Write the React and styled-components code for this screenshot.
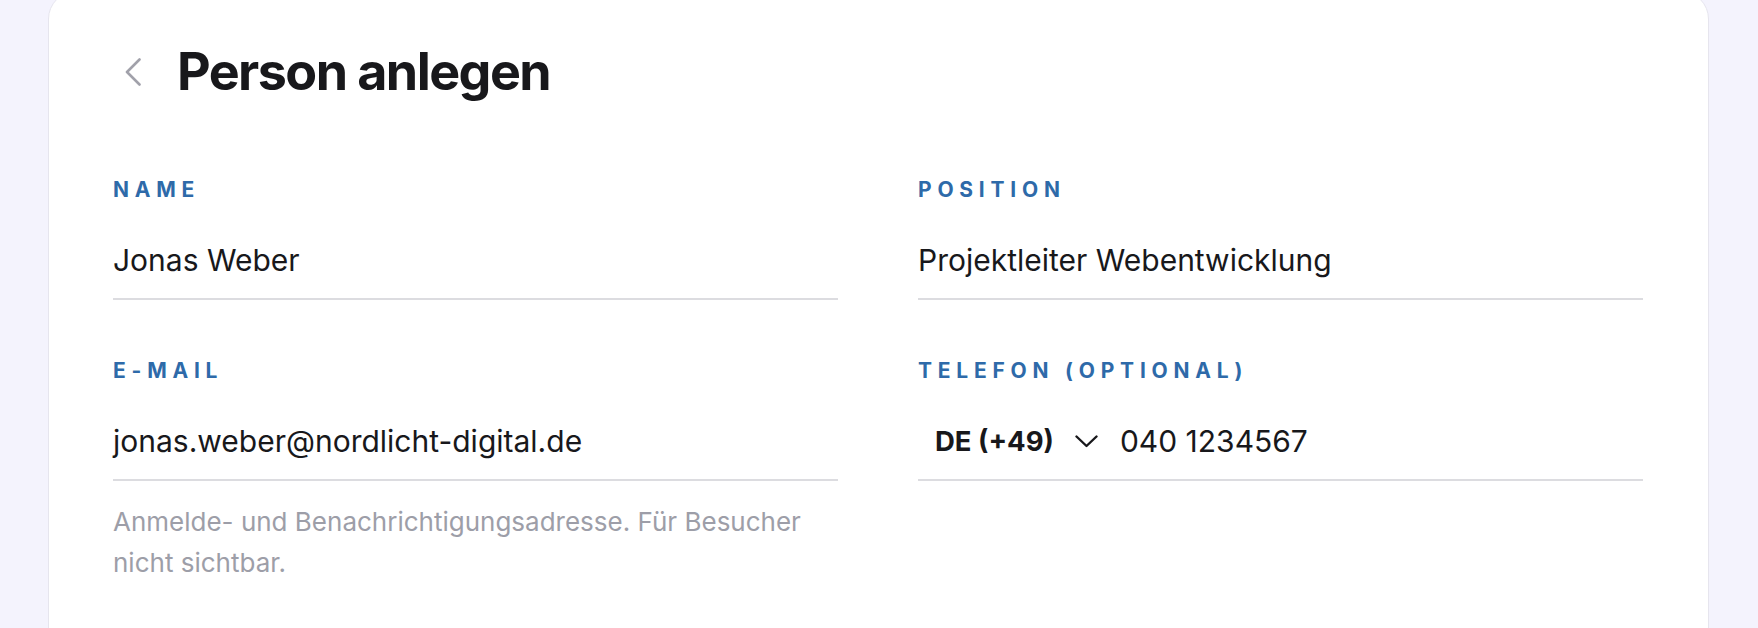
import React from "react";
import styled, { createGlobalStyle } from "styled-components";

const GlobalStyle = createGlobalStyle`
  html, body {
    margin: 0;
    padding: 0;
    overflow: hidden;
    background: #f4f3fd;
    font-family: Inter, "Noto Sans", sans-serif;
  }
`;

const Page = styled.div`
  min-height: 628px;
  background: #f4f3fd;
`;

const Card = styled.div`
  width: 1661px;
  margin: -9px 0 0 48px;
  box-sizing: border-box;
  background: #ffffff;
  border: 1px solid #e6e5ee;
  border-radius: 28px;
  padding: 49px 65px 120px 64px;
`;

const Header = styled.div`
  display: flex;
  align-items: center;
  gap: 24px;
  margin-bottom: 74px;
`;

const BackButton = styled.button`
  width: 40px;
  height: 40px;
  padding: 0;
  border: none;
  background: none;
  display: flex;
  align-items: center;
  justify-content: center;
  color: #a1a1aa;
  cursor: pointer;
`;

const Title = styled.h1`
  margin: 0;
  font-size: 52px;
  line-height: 62px;
  font-weight: 700;
  letter-spacing: -0.03em;
  color: #18181b;
`;

const Grid = styled.div`
  display: grid;
  grid-template-columns: 1fr 1fr;
  column-gap: 80px;
  row-gap: 58px;
`;

const Field = styled.div`
  display: flex;
  flex-direction: column;
`;

const Label = styled.label`
  font-size: 21px;
  line-height: 26px;
  font-weight: 700;
  letter-spacing: 0.275em;
  text-transform: uppercase;
  color: #2e6aa9;
  margin-bottom: 18px;
`;

const Control = styled.div`
  display: flex;
  align-items: center;
  padding: 21px 0 20px;
  border-bottom: 2px solid #dcdce0;
`;

const Value = styled.span`
  font-size: 30px;
  line-height: 36px;
  color: #18181b;
`;

const CountrySelect = styled.div`
  display: flex;
  align-items: center;
  gap: 21px;
  padding: 0 22px 0 17px;
  font-size: 27.5px;
  line-height: 36px;
  font-weight: 700;
  color: #18181b;
`;

const Hint = styled.p`
  margin: 20px 0 0;
  font-size: 26px;
  line-height: 41px;
  color: #9d9ea8;
`;

const ChevronLeft = () => (
  <svg width="18" height="28" viewBox="0 0 18 28" fill="none">
    <path
      d="M15.5 1.5 L3 14 L15.5 26.5"
      stroke="currentColor"
      strokeWidth="2.6"
      strokeLinecap="round"
      strokeLinejoin="round"
    />
  </svg>
);

const ChevronDown = () => (
  <svg width="23" height="13" viewBox="0 0 23 13" fill="none">
    <path
      d="M1.5 1.5 L11.5 11 L21.5 1.5"
      stroke="#18181b"
      strokeWidth="2.4"
      strokeLinecap="round"
      strokeLinejoin="round"
    />
  </svg>
);

export default function App() {
  return (
    <Page>
      <GlobalStyle />
      <Card>
        <Header>
          <BackButton aria-label="Zurück">
            <ChevronLeft />
          </BackButton>
          <Title>Person anlegen</Title>
        </Header>
        <Grid>
          <Field>
            <Label>Name</Label>
            <Control>
              <Value>Jonas Weber</Value>
            </Control>
          </Field>
          <Field>
            <Label>Position</Label>
            <Control>
              <Value>Projektleiter Webentwicklung</Value>
            </Control>
          </Field>
          <Field>
            <Label>E-Mail</Label>
            <Control>
              <Value>jonas.weber@nordlicht-digital.de</Value>
            </Control>
            <Hint>
              Anmelde- und Benachrichtigungsadresse. Für Besucher nicht
              sichtbar.
            </Hint>
          </Field>
          <Field>
            <Label>Telefon (optional)</Label>
            <Control>
              <CountrySelect>
                DE (+49)
                <ChevronDown />
              </CountrySelect>
              <Value>040 1234567</Value>
            </Control>
          </Field>
        </Grid>
      </Card>
    </Page>
  );
}
